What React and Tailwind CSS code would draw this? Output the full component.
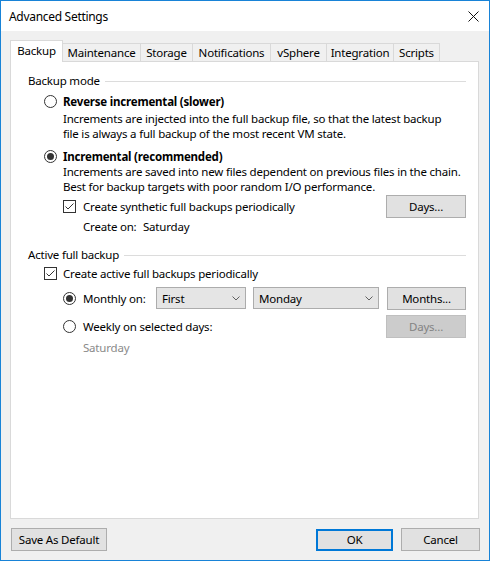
import React from 'react';

const font = "font-['Segoe_UI','Noto_Sans',sans-serif]";

function Radio({ checked }) {
  return (
    <span className="w-[13px] h-[13px] rounded-full border border-[#333333] bg-white flex items-center justify-center shrink-0">
      {checked && <span className="w-[7px] h-[7px] rounded-full bg-[#333333]" />}
    </span>
  );
}

function Check() {
  return (
    <span className="w-[13px] h-[13px] border border-[#333333] bg-white flex items-center justify-center shrink-0">
      <svg width="11" height="11" viewBox="0 0 11 11">
        <path d="M1.5 5.5 L4 8 L9.5 2.5" fill="none" stroke="#333333" strokeWidth="1" />
      </svg>
    </span>
  );
}

function Button({ children, disabled, className = '' }) {
  return (
    <div
      className={`h-[23px] flex items-center justify-center border ${
        disabled ? 'bg-[#cccccc] border-[#bfbfbf] text-[#838383]' : 'bg-[#e1e1e1] border-[#adadad] text-black'
      } ${className}`}
    >
      {children}
    </div>
  );
}

function Combo({ value, className = '' }) {
  return (
    <div className={`h-[22px] flex items-center justify-between pl-[5px] pr-[5px] bg-[#e5e5e5] border border-[#acacac] ${className}`}>
      <span>{value}</span>
      <svg width="8" height="5" viewBox="0 0 8 5">
        <path d="M0.5 0.5 L4 4 L7.5 0.5" fill="none" stroke="#606060" strokeWidth="1" />
      </svg>
    </div>
  );
}

function GroupHeader({ title }) {
  return (
    <div className="h-[15px] flex items-center gap-[5px]">
      <span>{title}</span>
      <div className="flex-1 h-px bg-[#dcdcdc] mt-[2px]" />
    </div>
  );
}

const tabs = [
  { name: 'Backup', w: 'w-[53px]' },
  { name: 'Maintenance', w: 'w-[78px]' },
  { name: 'Storage', w: 'w-[52px]' },
  { name: 'Notifications', w: 'w-[78px]' },
  { name: 'vSphere', w: 'w-[56px]' },
  { name: 'Integration', w: 'w-[67px]' },
  { name: 'Scripts', w: 'w-[46px]' },
];

export default function App() {
  return (
    <div className={`w-[490px] h-[561px] border border-[#1883d7] flex flex-col text-[11.5px] tracking-[-0.2px] leading-[15px] text-black whitespace-nowrap ${font}`}>
      {/* title bar */}
      <div className="h-[30px] bg-white flex items-center justify-between pl-[8px] pr-[10px]">
        <span className="text-[12px] tracking-[-0.3px]">Advanced Settings</span>
        <svg width="11" height="11" viewBox="0 0 11 11">
          <path d="M0.5 0.5 L10.5 10.5 M10.5 0.5 L0.5 10.5" stroke="#111111" strokeWidth="1" />
        </svg>
      </div>

      <div className="flex-1 bg-[#f0f0f0] pt-[9px] pl-[9px] pr-[10px] flex flex-col">
        {/* tabs */}
        <div className="h-[21px] flex items-end">
          {tabs.map((t, i) =>
            i === 0 ? (
              <div
                key={t.name}
                className={`${t.w} h-[22px] -mb-px relative z-10 bg-white border border-b-0 border-[#d9d9d9] flex items-center justify-center pb-[2px]`}
              >
                {t.name}
              </div>
            ) : (
              <div
                key={t.name}
                className={`${t.w} h-[18px] bg-[#f0f0f0] border border-b-0 border-l-0 border-[#d9d9d9] flex items-center justify-center`}
              >
                {t.name}
              </div>
            )
          )}
        </div>

        {/* panel */}
        <div className="h-[458px] bg-white border border-[#d9d9d9] pl-[17px] pr-[12px] pt-[11px] flex flex-col">
          <GroupHeader title="Backup mode" />

          <div className="pl-[16px] flex flex-col">
            <div className="h-[16px] mt-[5px] flex items-center gap-[6px]">
              <Radio />
              <span className="font-bold">Reverse incremental (slower)</span>
            </div>
            <div className="pl-[19px] mt-[2px]">
              <p>Increments are injected into the full backup file, so that the latest backup</p>
              <p>file is always a full backup of the most recent VM state.</p>
            </div>

            <div className="h-[16px] mt-[7px] flex items-center gap-[6px]">
              <Radio checked />
              <span className="font-bold">Incremental (recommended)</span>
            </div>
            <div className="pl-[19px]">
              <p>Increments are saved into new files dependent on previous files in the chain.</p>
              <p>Best for backup targets with poor random I/O performance.</p>
            </div>

            <div className="pl-[19px] h-[23px] mt-px flex items-center justify-between">
              <div className="flex items-center gap-[7px]">
                <Check />
                <span>Create synthetic full backups periodically</span>
              </div>
              <Button className="w-[80px]">Days...</Button>
            </div>
            <div className="pl-[39px] h-[15px] mt-px flex items-center">
              <span className="w-[60px]">Create on:</span>
              <span>Saturday</span>
            </div>
          </div>

          <div className="mt-[13px]">
            <GroupHeader title="Active full backup" />
          </div>

          <div className="pl-[16px] flex flex-col">
            <div className="h-[16px] mt-[3px] flex items-center gap-[6px]">
              <Check />
              <span>Create active full backups periodically</span>
            </div>

            <div className="pl-[19px] h-[22px] mt-[6px] flex items-center">
              <div className="w-[93px] flex items-center gap-[7px]">
                <Radio checked />
                <span>Monthly on:</span>
              </div>
              <Combo value="First" className="w-[90px]" />
              <Combo value="Monday" className="w-[126px] ml-[7px]" />
              <Button className="w-[79px] ml-auto">Months...</Button>
            </div>

            <div className="pl-[19px] h-[23px] mt-[6px] flex items-center justify-between">
              <div className="flex items-center gap-[7px]">
                <Radio />
                <span>Weekly on selected days:</span>
              </div>
              <Button disabled className="w-[80px]">Days...</Button>
            </div>
            <div className="pl-[39px] h-[15px] mt-[2px] text-[#8a8a8a]">Saturday</div>
          </div>
        </div>

        {/* footer */}
        <div className="mt-[9px] flex items-center">
          <Button className="w-[96px] ml-[1px] h-[22px]">Save As Default</Button>
          <div className="ml-auto flex items-center gap-[8px] -mr-[1px]">
            <div className="w-[77px] h-[22px] flex items-center justify-center bg-[#e1e1e1] border-2 border-[#0078d7]">OK</div>
            <Button className="w-[79px] h-[22px]">Cancel</Button>
          </div>
        </div>
      </div>
    </div>
  );
}
